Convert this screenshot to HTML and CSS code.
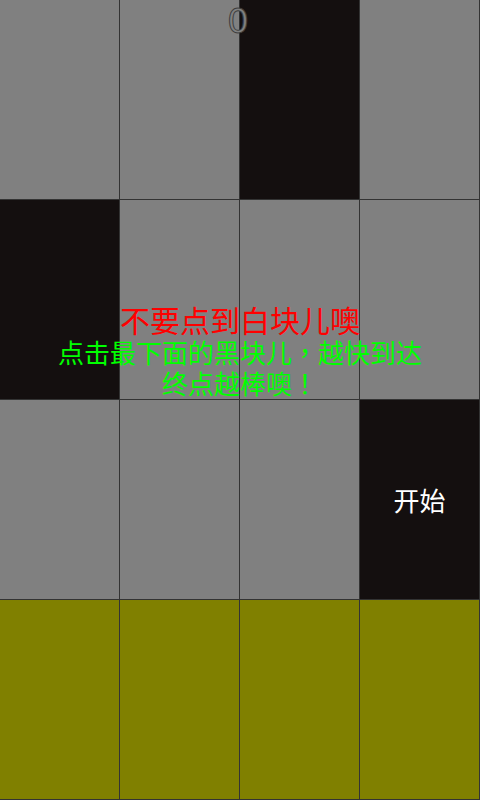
FILE: index.html
```html
<!DOCTYPE html>
<html>
<head>
<meta charset="utf-8">
<link rel="stylesheet" href="styles.css">
</head>
<body>
<div class="stage">
  <div class="board">
    <div class="cell gray"></div>
    <div class="cell gray"></div>
    <div class="cell black"></div>
    <div class="cell gray"></div>

    <div class="cell black"></div>
    <div class="cell gray"></div>
    <div class="cell gray"></div>
    <div class="cell gray"></div>

    <div class="cell gray"></div>
    <div class="cell gray"></div>
    <div class="cell gray"></div>
    <div class="cell black start"><span class="start-label">开始</span></div>

    <div class="cell olive"></div>
    <div class="cell olive"></div>
    <div class="cell olive"></div>
    <div class="cell olive"></div>
  </div>
  <div class="score">0</div>
  <div class="hint">
    <div class="hint-title">不要点到白块儿噢</div>
    <div class="hint-body">点击最下面的黑块儿<span class="punct">，</span>越快到达<br>终点越棒噢<span class="punct">！</span></div>
  </div>
</div>
</body>
</html>
```
FILE: styles.css
```css
html, body {
  margin: 0;
  padding: 0;
  background: #808080;
}
body {
  width: 480px;
  height: 800px;
  overflow: hidden;
  font-family: "Noto Sans CJK SC", "Noto Sans", sans-serif;
}
.stage {
  position: relative;
  width: 480px;
  height: 800px;
}
.board {
  display: grid;
  grid-template-columns: repeat(4, 120px);
  grid-template-rows: repeat(4, 200px);
}
.cell {
  box-sizing: border-box;
  border-right: 1px solid #333333;
  border-bottom: 1px solid #333333;
}
.gray { background: #808080; }
.black { background: #140f0f; }
.olive { background: #808000; }
.start {
  display: flex;
  align-items: center;
  justify-content: center;
}
.start-label {
  color: #ffffff;
  font-size: 26px;
  line-height: 1;
}
.score {
  position: absolute;
  top: 0;
  left: 0;
  width: 476px;
  text-align: center;
  font-family: "DejaVu Sans", sans-serif;
  font-size: 34px;
  line-height: 42px;
  color: #808080;
  -webkit-text-stroke: 1px #3c3c3c;
}
.hint {
  position: absolute;
  left: 0;
  top: 302px;
  width: 480px;
  display: flex;
  flex-direction: column;
  align-items: center;
  text-align: center;
}
.hint-title {
  color: #ff0000;
  font-size: 30px;
  line-height: 34px;
}
.hint-body {
  color: #00ff00;
  font-size: 26px;
  line-height: 31px;
}
.punct {
  font-family: "Noto Sans CJK TC", "Noto Sans CJK SC", sans-serif;
}
```
